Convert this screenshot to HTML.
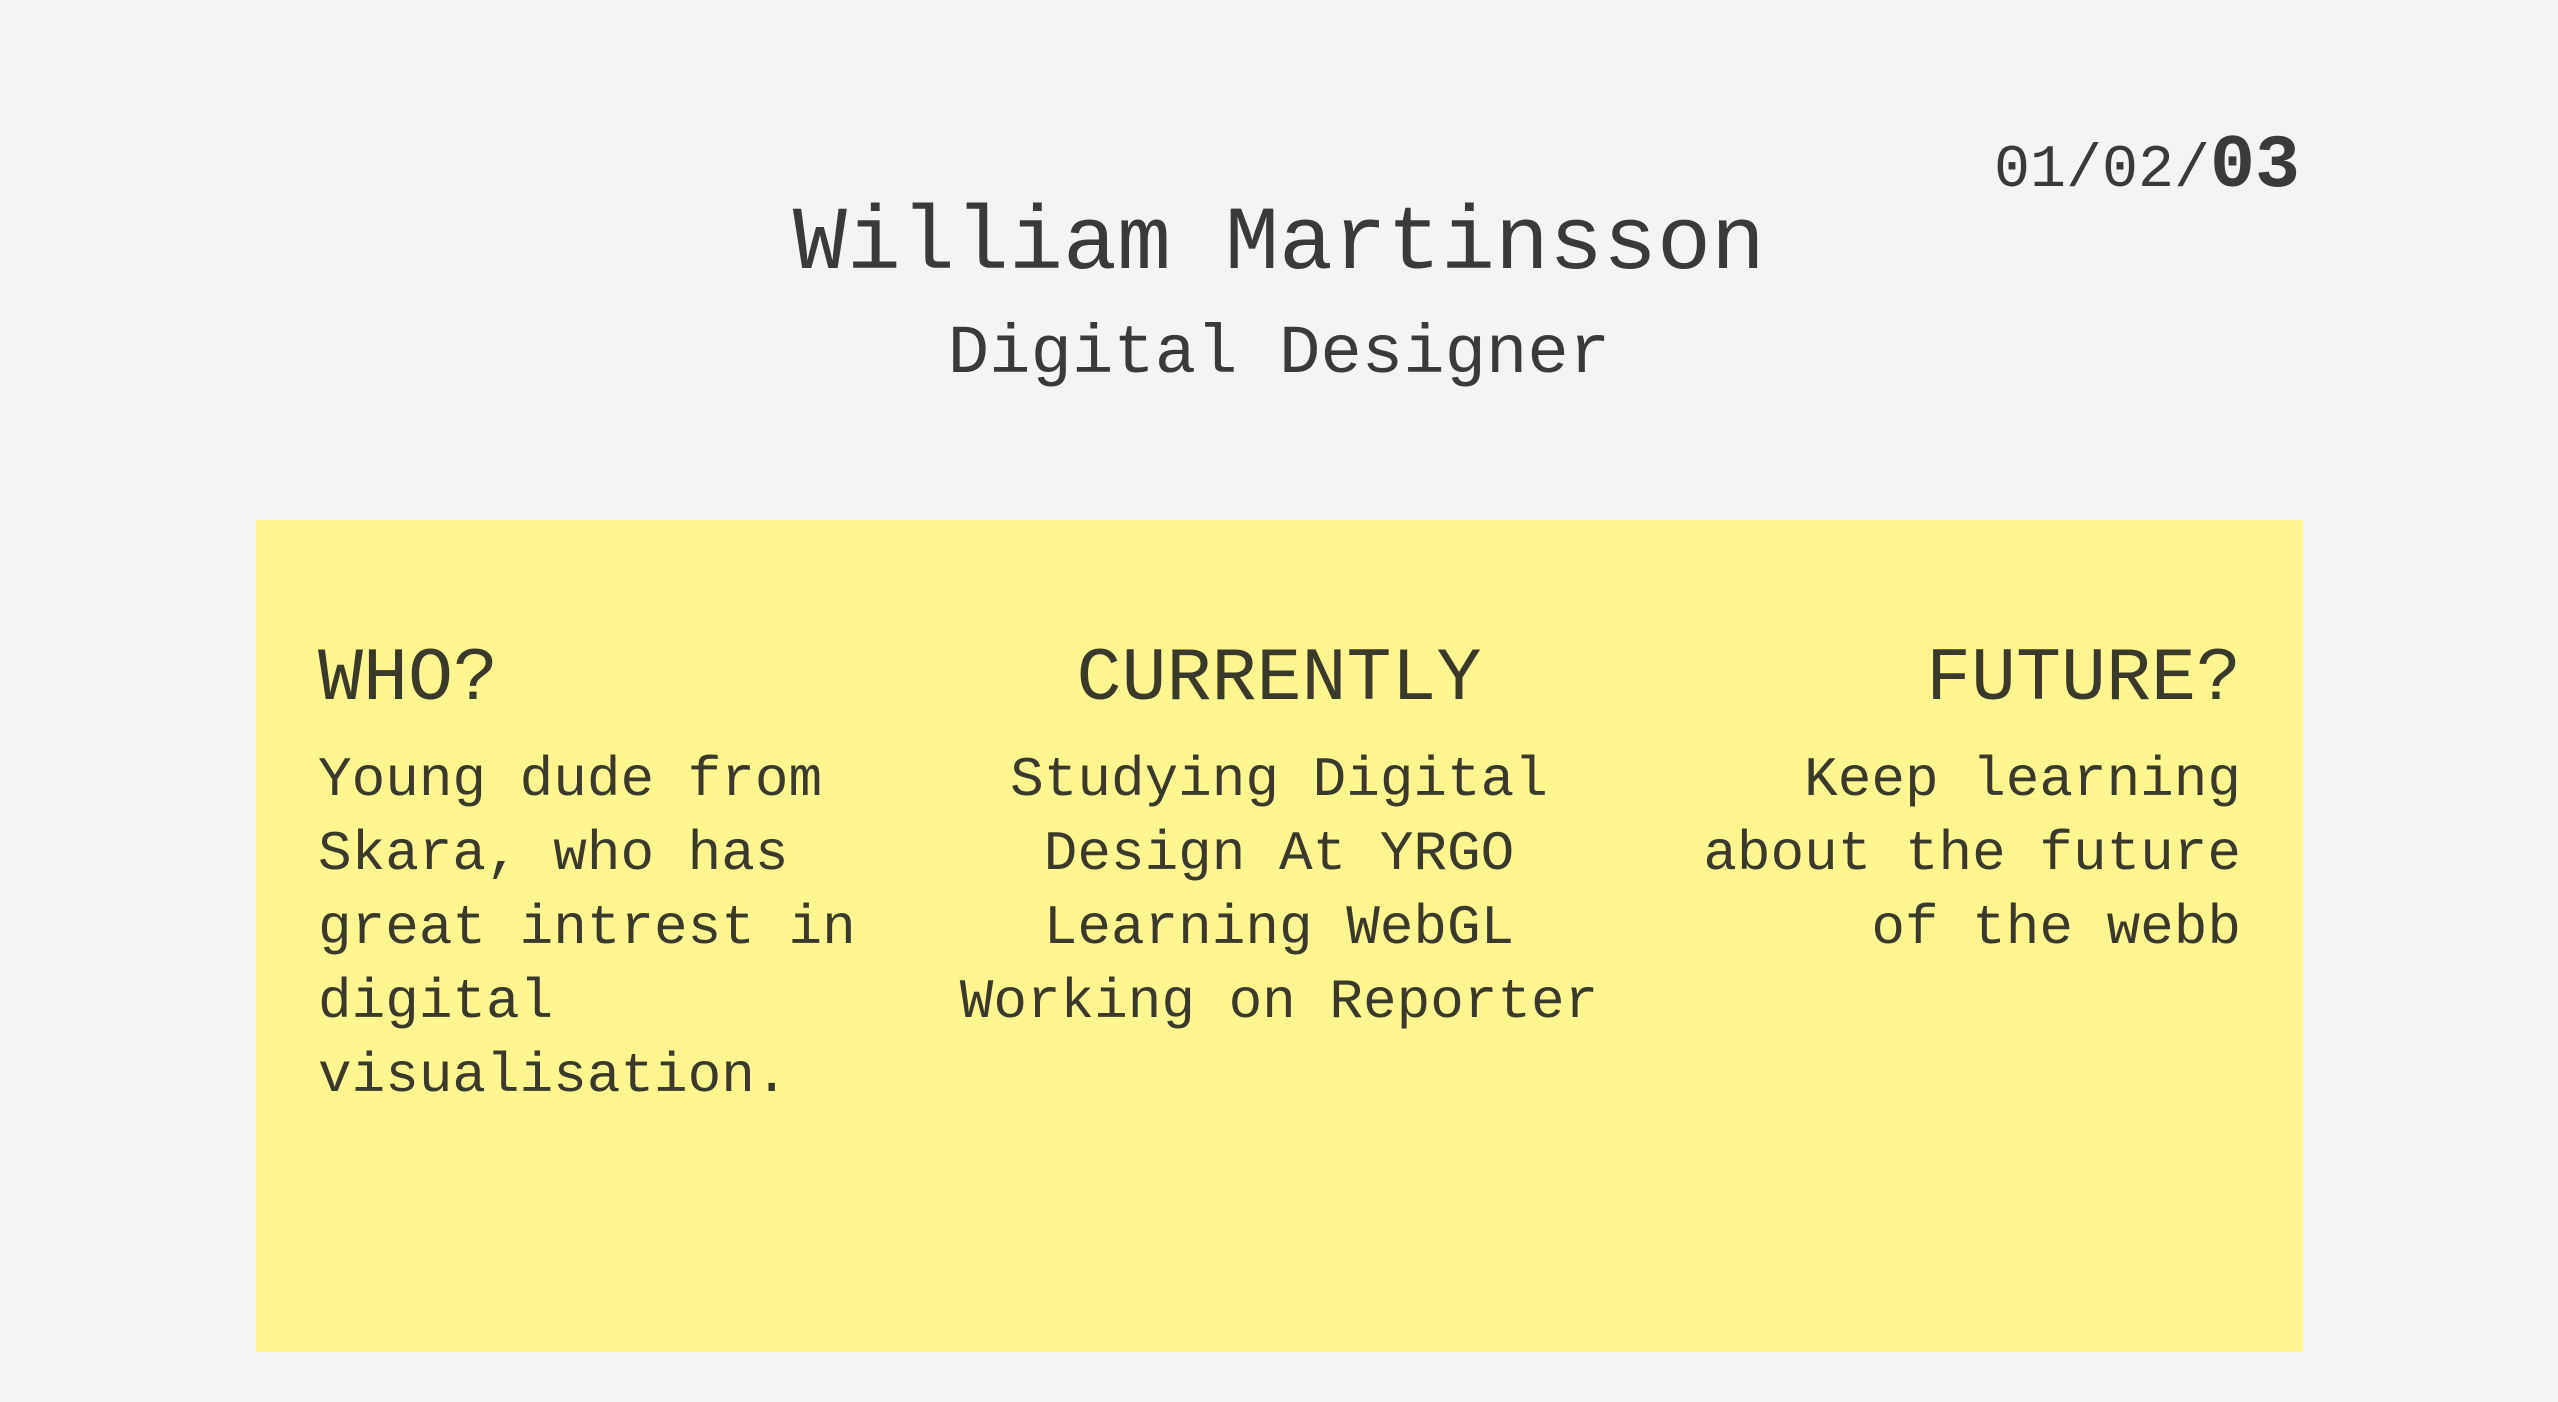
<!DOCTYPE html>
<html><head><meta charset="utf-8"><style>
html,body{margin:0;padding:0}
body{width:2558px;height:1402px;background:#f4f4f4;position:relative;overflow:hidden;font-family:"Liberation Mono",monospace;color:#3a3a3a}
.a{position:absolute;white-space:nowrap}
#title{left:0;width:2558px;text-align:center;top:200px;font-size:90px;line-height:90px}
#sub{left:0;width:2558px;text-align:center;top:320px;font-size:69px;line-height:69px}
#pg{right:258px;top:129px;font-size:60px;line-height:75px}
#pg b{font-size:75px;font-weight:bold}
#box{position:absolute;left:256px;top:520px;width:2047px;height:832px;background:#fff591}
.h{top:642px;font-size:75px;line-height:75px;color:#3a3a2a}
.t{top:743px;font-size:56px;line-height:74px;color:#3a3a2a}
</style></head><body>
<div class="a" id="pg">01/02/<b>03</b></div>
<div class="a" id="title">William Martinsson</div>
<div class="a" id="sub">Digital Designer</div>
<div id="box"></div>
<div class="a h" style="left:318px">WHO?</div>
<div class="a t" style="left:318px">Young dude from<br>Skara, who has<br>great intrest in<br>digital<br>visualisation.</div>
<div class="a h" style="left:779px;width:1000px;text-align:center">CURRENTLY</div>
<div class="a t" style="left:779px;width:1000px;text-align:center">Studying Digital<br>Design At YRGO<br>Learning WebGL<br>Working on Reporter</div>
<div class="a h" style="right:317px;text-align:right">FUTURE?</div>
<div class="a t" style="right:317px;text-align:right">Keep learning<br>about the future<br>of the webb</div>
</body></html>
